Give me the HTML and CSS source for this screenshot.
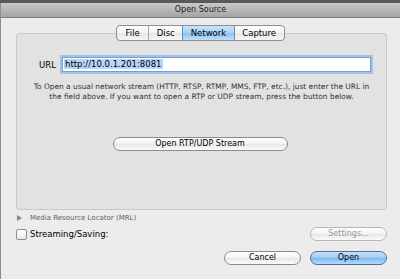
FILE: index.html
```html
<!DOCTYPE html>
<html>
<head>
<meta charset="utf-8">
<link rel="stylesheet" href="styles.css">
</head>
<body>
<div class="topstrip"></div>
<div class="window">
  <div class="titlebar">Open Source</div>
  <div class="content">
    <div class="groupwrap">
      <div class="group">
        <div class="urlrow">
          <span class="urllabel">URL</span>
          <div class="input"><span class="sel">http://10.0.1.201:8081</span></div>
        </div>
        <p class="desc">To Open a usual network stream (HTTP, RTSP, RTMP, MMS, FTP, etc.), just enter the URL in<br>the field above. If you want to open a RTP or UDP stream, press the button below.</p>
        <div class="btnrow"><div class="btn wide">Open RTP/UDP Stream</div></div>
      </div>
      <div class="tabs">
        <div class="tab">File</div>
        <div class="tab">Disc</div>
        <div class="tab active">Network</div>
        <div class="tab">Capture</div>
      </div>
    </div>
    <div class="mrl"><span class="tri"></span>Media Resource Locator (MRL)</div>
    <div class="streamrow">
      <label class="chk"><span class="box"></span>Streaming/Saving:</label>
      <div class="btn small disabled">Settings...</div>
    </div>
    <div class="actions">
      <div class="btn small">Cancel</div>
      <div class="btn small primary">Open</div>
    </div>
  </div>
</div>
</body>
</html>
```
FILE: styles.css
```css
html, body { margin: 0; padding: 0; }
body {
  width: 400px; height: 279px; overflow: hidden;
  background: #ececec;
  font-family: "DejaVu Sans", "Liberation Sans", sans-serif;
  color: #000;
}
.topstrip { height: 3px; background: #5a5a5a; }
.window {
  border-left: 1px solid #8c8c8c;
  height: 276px;
  background: #ececec;
}
.titlebar {
  height: 14px;
  background: linear-gradient(#c9c9c9, #a5a5a5);
  border-bottom: 1px solid #7a7a7a;
  text-align: center;
  font-size: 8px;
  line-height: 14px;
  color: #222;
}
.content { padding: 0 13px 0 15px; }
.groupwrap { position: relative; padding-top: 15px; }
.group {
  height: 177px;
  background: #e2e2e2;
  border: 1px solid #c9c9c9;
  border-radius: 3px;
  box-sizing: border-box;
}
.tabs {
  position: absolute; top: 7px; left: 100px;
  display: flex;
  height: 14px;
  border: 1px solid #8e8e8e;
  border-radius: 4px;
  overflow: hidden;
  background: linear-gradient(#ffffff, #f1f1f1 50%, #e6e6e6 51%, #f6f6f6);
}
.tab {
  font-size: 8.5px;
  line-height: 14px;
  padding: 0 7.5px;
  border-left: 1px solid #a8a8a8;
}
.tab:first-child { border-left: none; padding: 0 8.5px; }
.tab.active {
  background: linear-gradient(#c9e3f9, #a9d0f3 50%, #8cc0ee 51%, #bde0fc);
  border-left-color: #6a8cb3;
}
.tab.active + .tab { border-left-color: #6a8cb3; }
.urlrow {
  display: flex; align-items: center;
  margin: 23px 0 0 22px;
}
.urllabel { font-size: 8.5px; width: 23px; }
.input {
  width: 306px; height: 13px;
  background: #fff;
  border: 1px solid #7e9cc4;
  box-shadow: 0 0 0 2px #9fc3ea;
  font-size: 8.5px; line-height: 13px;
  padding-left: 1px;
}
.sel { background: #b7d6fb; padding: 0 1px; }
.desc {
  margin: 10px 0 0 0;
  text-align: center;
  font-size: 7.45px;
  line-height: 10px;
  color: #333;
}
.btnrow { display: flex; justify-content: center; margin-top: 35px; margin-left: -3px; }
.btn {
  box-sizing: border-box;
  height: 14px;
  border: 1px solid #8a8a8a;
  border-radius: 7px;
  background: linear-gradient(#ffffff, #f3f3f3 50%, #e6e6e6 51%, #fbfbfb);
  font-size: 8px; line-height: 12px;
  text-align: center;
}
.btn.wide { width: 175px; }
.btn.small { width: 77px; }
.btn.disabled { color: #9a9a9a; border-color: #b6b6b6; }
.btn.primary {
  background: linear-gradient(#c6e1f8, #9fcbf1 50%, #7db7ec 51%, #b4dcfb);
  border-color: #4f6f99;
}
.mrl {
  margin-top: 3px;
  font-size: 7px; color: #606060;
  display: flex; align-items: center; height: 10px;
  margin-left: 1px;
}
.tri {
  width: 0; height: 0;
  border-left: 5px solid #8a8a8a;
  border-top: 3px solid transparent;
  border-bottom: 3px solid transparent;
  margin-right: 8px;
}
.streamrow {
  display: flex; justify-content: space-between; align-items: center;
  margin-top: 4px;
}
.chk { display: flex; align-items: center; font-size: 8.5px; }
.box {
  width: 9px; height: 9px;
  border: 1px solid #8d8d8d; border-radius: 2px;
  background: linear-gradient(#ffffff, #e9e9e9);
  margin-right: 3px;
}
.actions {
  display: flex; justify-content: flex-end; gap: 9px;
  margin-top: 10px;
}
```
